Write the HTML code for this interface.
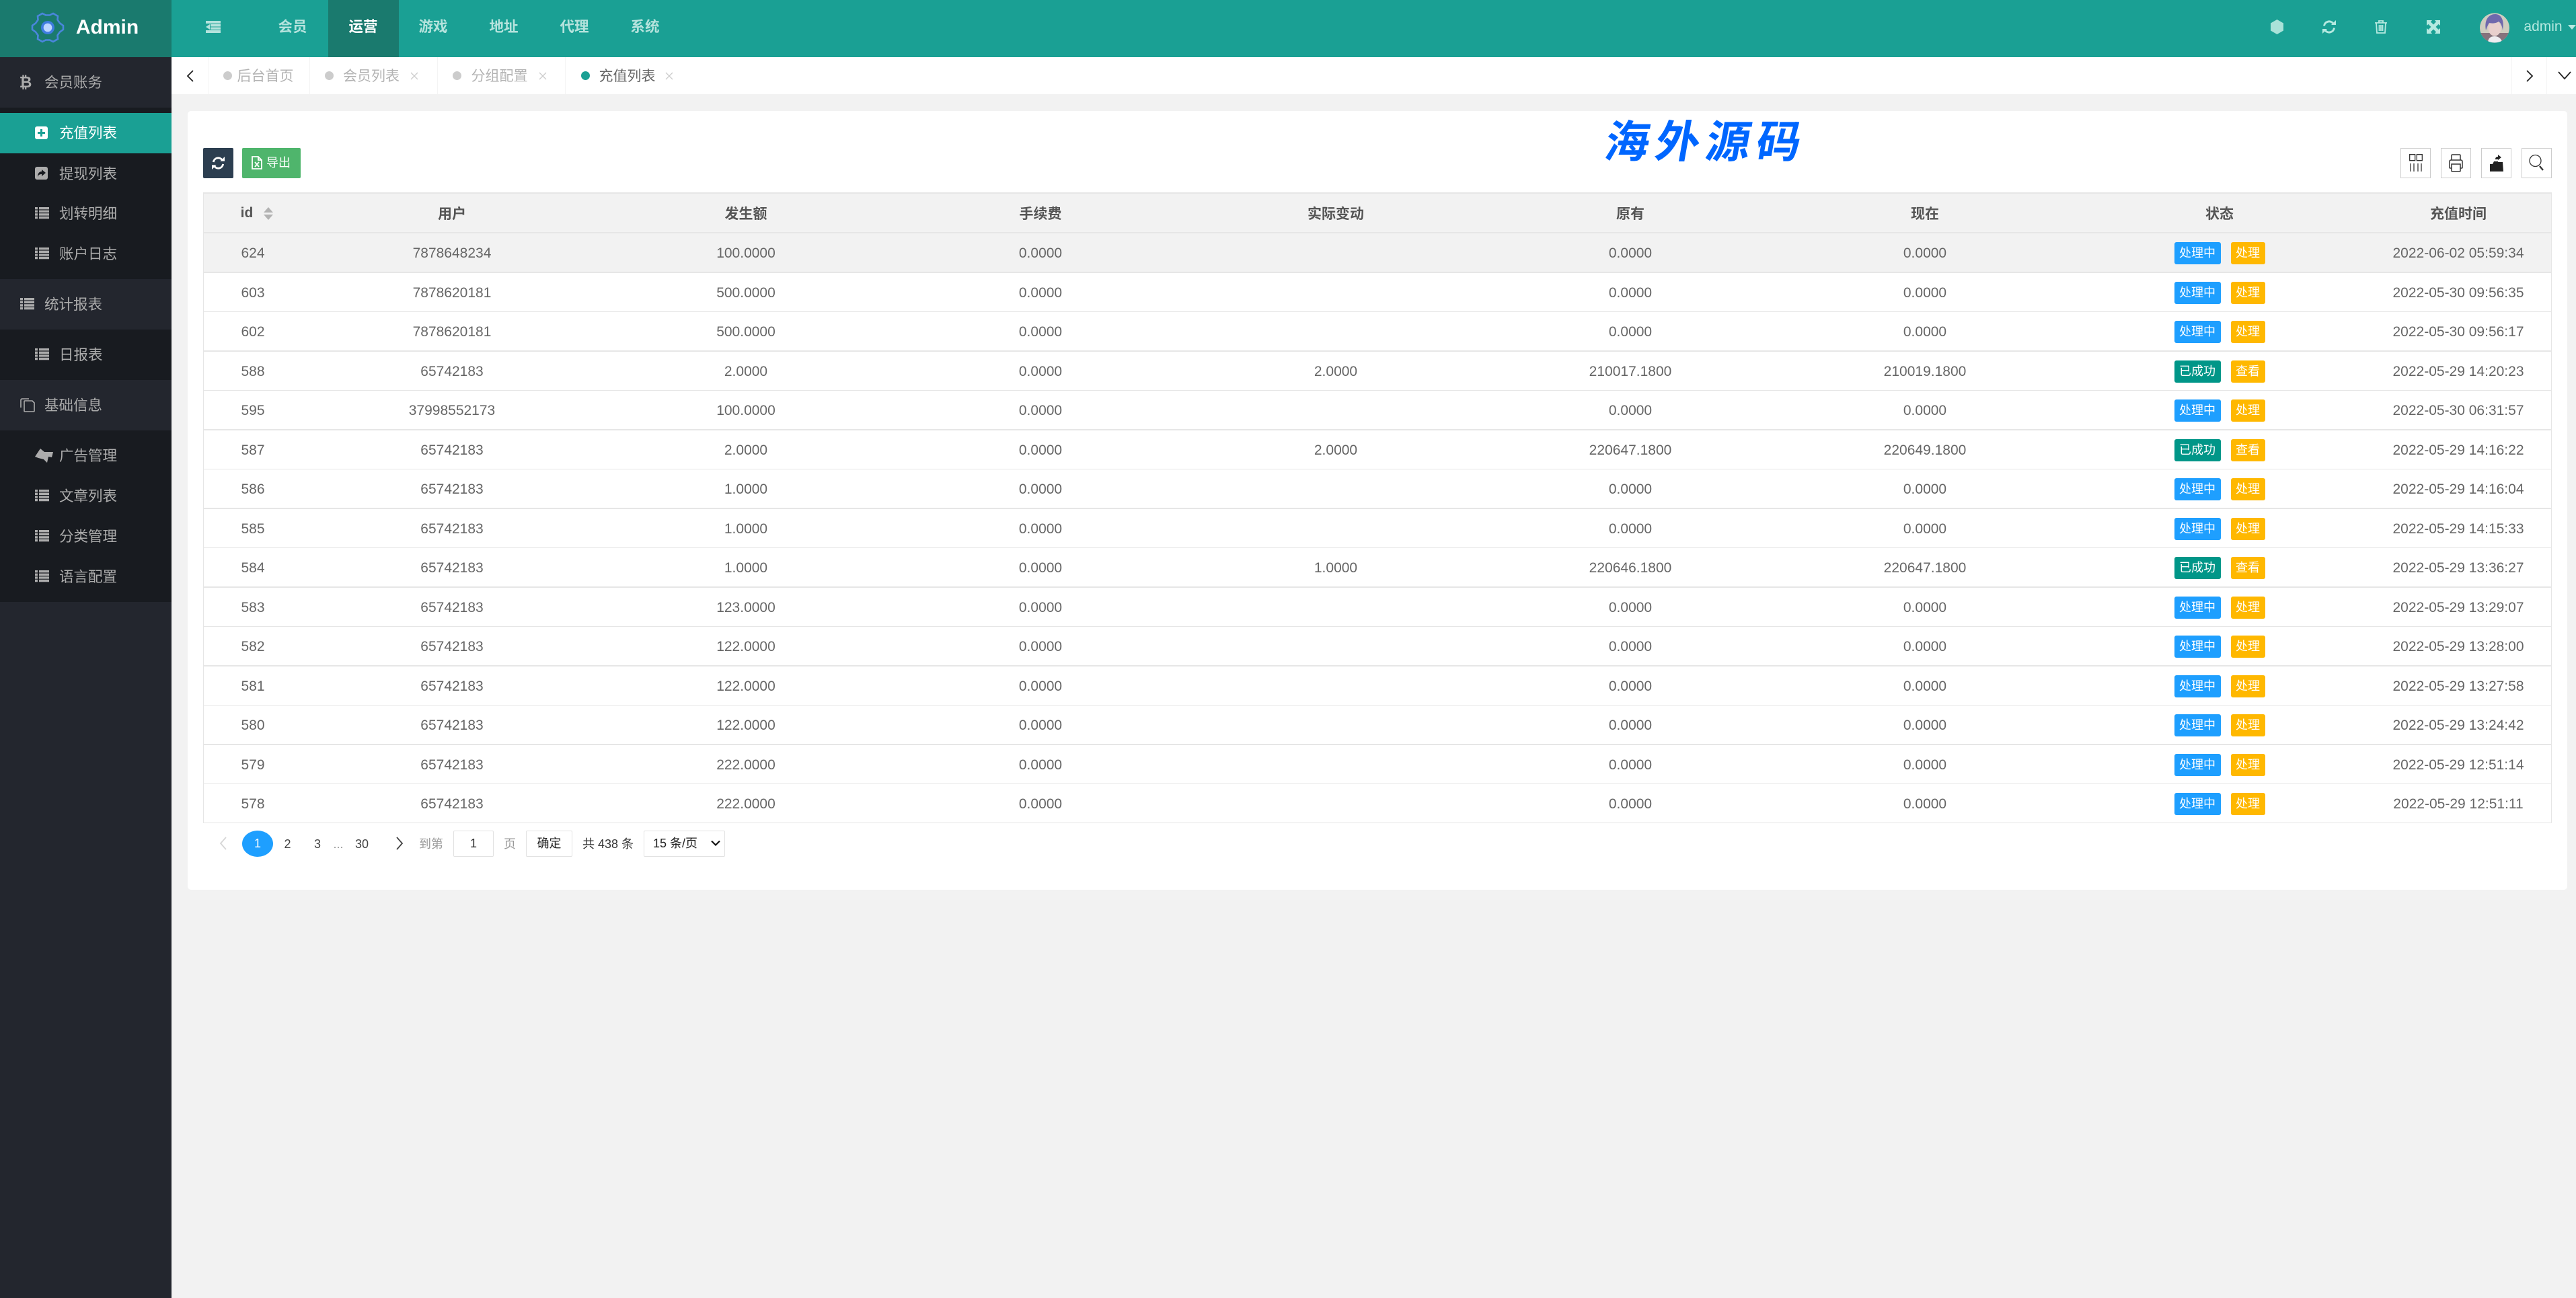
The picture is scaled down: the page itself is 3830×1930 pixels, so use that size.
<!DOCTYPE html>
<html lang="zh"><head><meta charset="utf-8"><title>Admin</title>
<style>
*{box-sizing:border-box}
html,body{margin:0;padding:0}
body{width:3830px;height:1930px;position:relative;overflow:hidden;background:#f2f2f2;font-family:"Liberation Sans","Noto Sans CJK SC",sans-serif;color:#666;font-size:21px}
.a{position:absolute}
.t{position:absolute;white-space:nowrap;line-height:30px;transform:translate(-50%,-50%)}
.s{position:absolute;white-space:nowrap;line-height:30px;transform:translateY(calc(-50% + 1px));color:#acacac;font-size:21.5px}
.nav{font-weight:bold;color:#b5e3dd;font-size:21.5px}
.tb{position:absolute;top:220px;width:45px;height:45px;border:1px solid #ccc;display:flex;align-items:center;justify-content:center;background:#fff}
.h{position:absolute;left:302px;top:288px;width:3492px;height:59px;background:#f2f2f2;border-bottom:2px solid #e6e6e6;display:grid;grid-template-columns:148px 444px 430px 446px 432px 444px 432px 444px 272px;align-items:center;text-align:center;font-weight:bold;color:#555;font-size:21px}
.r{position:absolute;left:302px;width:3492px;background:#fff;display:grid;grid-template-columns:148px 444px 430px 446px 432px 444px 432px 444px 272px;align-items:center;text-align:center;border-bottom:1px solid #e6e6e6;color:#666;font-size:21px;padding-top:2px}
.k{border-bottom:2px solid #e6e6e6}
.g{display:flex;justify-content:center;gap:15px}
.g b{font-weight:normal;height:33px;line-height:33px;color:#fff;font-size:18px;border-radius:3px;display:block;text-align:center}
.p{width:69px;background:#1e9fff}.o{width:69px;background:#009688}.y{width:51px;background:#ffb800}
.l{padding-right:6px}
.pg{position:absolute;top:1254.5px;transform:translate(-50%,-50%);font-size:18px;white-space:nowrap;color:#444;line-height:24px}
.bx{position:absolute;top:1235px;height:39px;border:1px solid #e2e2e2;border-radius:2px;background:#fff;text-align:center;line-height:37px;font-size:18px;color:#333}
</style></head><body>
<svg width="0" height="0" style="position:absolute"><defs>
<symbol id="li" viewBox="0 0 21 18"><path fill="#acacac" d="M0 0h4v3.400H0zM6 0h15v3.400H6zM0 4.600h4v3.400H0zM6 4.600h15v3.400H6zM0 9.200h4v3.400H0zM6 9.200h15v3.400H6zM0 13.800h4v3.400H0zM6 13.800h15v3.400H6z"/></symbol>
</defs></svg>

<!-- header -->
<div class="a" style="left:0;top:0;width:3830px;height:85px;background:#1aa094"></div>
<div class="a" style="left:0;top:0;width:255px;height:85px;background:#1a7a6e"></div>
<div class="a" style="left:488px;top:0;width:105px;height:85px;background:#1a7a6e"></div>
<svg class="a" style="left:46px;top:17px" width="50" height="48" viewBox="-25 -24 50 48"><path fill="none" stroke="#4a86dc" stroke-width="2.600" d="M-8-21 -3-18.500H3L8-21 15-17 14.500-11.500 18-6.500 23-3V3L18 6.500 14.500 11.500 15 17 8 21 3 18.500H-3L-8 21-15 17-14.500 11.500-18 6.500-23 3V-3L-18-6.500-14.500-11.500-15-17Z"/><circle r="10" fill="#3f7de0"/><circle r="6.300" fill="#bcd6ff"/></svg>
<div class="t" style="left:159.500px;top:41px;color:#fff;font-weight:bold;font-size:30px">Admin</div>
<svg class="a" style="left:306px;top:31px" width="22" height="18" viewBox="0 0 22 18"><path fill="#b5e3dd" d="M0 0h22v4H0zM7 5h15v3.500H7zM7 9.500h15v3.500H7zM0 14h22v4H0zM6 5v8L0 9z"/></svg>
<div class="t nav" style="left:435px;top:40px">会员</div>
<div class="t nav" style="left:540px;top:40px;color:#fff">运营</div>
<div class="t nav" style="left:644px;top:40px">游戏</div>
<div class="t nav" style="left:749px;top:40px">地址</div>
<div class="t nav" style="left:854px;top:40px">代理</div>
<div class="t nav" style="left:959px;top:40px">系统</div>
<svg class="a" style="left:3376px;top:29px" width="19" height="22" viewBox="0 0 19 22"><path fill="#a9e2d9" d="M9.500 0 19 5.500V16.500L9.500 22 0 16.500V5.500Z"/></svg>
<svg class="a" style="left:3453px;top:30px" width="20" height="20" viewBox="0 0 20 20"><path fill="none" stroke="#b5e9e0" stroke-width="3" d="M2.500 8.500A7.500 7.500 0 0 1 16 5M17.500 11.500A7.500 7.500 0 0 1 4 15"/><path fill="#b5e9e0" d="M13 7h7V0zM7 13H0v7z"/></svg>
<svg class="a" style="left:3531px;top:30px" width="18" height="20" viewBox="0 0 18 20"><path fill="none" stroke="#b5e9e0" stroke-width="1.800" d="M0 4h18M6 4V1h6v3M2 4l1 15h12l1-15M6.500 7v9M9 7v9M11.500 7v9"/></svg>
<svg class="a" style="left:3608px;top:30px" width="20" height="20" viewBox="0 0 20 20"><path fill="#b5e9e0" d="M0 0h8L6 2.500 10 6.500 14 2.500 12 0h8v8L17.500 6 13.500 10 17.500 14 20 12v8h-8l2-2.500-4-4-4 4L8 20H0v-8l2.500 2 4-4-4-4L0 8z"/></svg>
<svg class="a" style="left:3687px;top:19px" width="44" height="45" viewBox="0 0 44 45"><defs><clipPath id="cp"><circle cx="22" cy="22.500" r="22"/></clipPath></defs><g clip-path="url(#cp)"><rect width="44" height="45" fill="#cfcdbf"/><rect y="30" width="44" height="15" fill="#85737c"/><path d="M12 45c0-8 5-10 10-10s11 3 11 10z" fill="#eeecf0"/><ellipse cx="22" cy="23" rx="9.500" ry="11.500" fill="#e8cfcd"/><path d="M9 26C6 8 15 2 23 2s14 8 11 24c-1-7-3-11-6-13-4 3-11 3-14 2-2 3-3 6-5 11z" fill="#6f68ad"/></g></svg>
<div class="t" style="left:3781px;top:40px;color:#b5e9e0;font-size:21px">admin</div>
<div class="a" style="left:3818px;top:37px;width:0;height:0;border-left:6px solid transparent;border-right:6px solid transparent;border-top:7px solid #b5e9e0"></div>

<!-- sidebar -->
<div class="a" style="left:0;top:85px;width:255px;height:1845px;background:#23262e"></div>
<div class="a" style="left:0;top:160px;width:255px;height:255px;background:#181b20"></div>
<div class="a" style="left:0;top:490px;width:255px;height:75px;background:#181b20"></div>
<div class="a" style="left:0;top:640px;width:255px;height:255px;background:#181b20"></div>
<div class="a" style="left:0;top:168px;width:255px;height:60px;background:#1aa094"></div>
<div class="t" style="left:38px;top:122px;color:#acacac;font-size:23px;font-weight:bold">₿</div>
<div class="s" style="left:66px;top:122px">会员账务</div>
<svg class="a" style="left:52px;top:188px" width="19" height="19" viewBox="0 0 19 19"><rect width="19" height="19" rx="3" fill="#fff"/><path fill="#1aa094" d="M8 4h3v4h4v3h-4v4H8v-4H4V8h4z"/></svg>
<div class="s" style="left:88px;top:197px;color:#fff">充值列表</div>
<svg class="a" style="left:52px;top:248px" width="19" height="19" viewBox="0 0 19 19"><rect width="19" height="19" rx="3" fill="#acacac"/><path fill="#181b20" d="M4 15C4 9 7 7 10 7V4l6 5-6 5v-3c-3 0-5 1-6 4z"/></svg>
<div class="s" style="left:88px;top:258px">提现列表</div>
<svg class="a" style="left:52px;top:308px" width="21" height="18"><use href="#li"/></svg>
<div class="s" style="left:88px;top:317px">划转明细</div>
<svg class="a" style="left:52px;top:368px" width="21" height="18"><use href="#li"/></svg>
<div class="s" style="left:88px;top:377px">账户日志</div>
<svg class="a" style="left:30px;top:443px" width="21" height="18"><use href="#li"/></svg>
<div class="s" style="left:66px;top:452px">统计报表</div>
<svg class="a" style="left:52px;top:518px" width="21" height="18"><use href="#li"/></svg>
<div class="s" style="left:88px;top:527px">日报表</div>
<svg class="a" style="left:30px;top:592px" width="22" height="21" viewBox="0 0 22 21"><path fill="none" stroke="#acacac" stroke-width="1.600" d="M13 1H3Q1 1 1 3v11M7 4h11l3 3v12a1 1 0 0 1-1 1H7a1 1 0 0 1-1-1V5a1 1 0 0 1 1-1z"/></svg>
<div class="s" style="left:66px;top:602px">基础信息</div>
<svg class="a" style="left:52px;top:667px" width="28" height="21" viewBox="0 0 28 21"><path fill="#acacac" d="M0 12 8 0 14 5 27 5 25 13 20 12 18 21 13 16 5 14z"/></svg>
<div class="s" style="left:88px;top:677px">广告管理</div>
<svg class="a" style="left:52px;top:728px" width="21" height="18"><use href="#li"/></svg>
<div class="s" style="left:88px;top:737px">文章列表</div>
<svg class="a" style="left:52px;top:788px" width="21" height="18"><use href="#li"/></svg>
<div class="s" style="left:88px;top:797px">分类管理</div>
<svg class="a" style="left:52px;top:848px" width="21" height="18"><use href="#li"/></svg>
<div class="s" style="left:88px;top:857px">语言配置</div>

<!-- tabs -->
<div class="a" style="left:255px;top:85px;width:3575px;height:55px;background:#fff"></div>
<div class="a" style="left:310px;top:85px;width:1px;height:55px;background:#f4f4f4"></div>
<div class="a" style="left:460px;top:85px;width:1px;height:55px;background:#f4f4f4"></div>
<div class="a" style="left:650px;top:85px;width:1px;height:55px;background:#f4f4f4"></div>
<div class="a" style="left:840px;top:85px;width:1px;height:55px;background:#f4f4f4"></div>
<div class="a" style="left:3734px;top:85px;width:1px;height:55px;background:#f4f4f4"></div>
<div class="a" style="left:3786px;top:85px;width:1px;height:55px;background:#f4f4f4"></div>
<svg class="a" style="left:277px;top:104px" width="12" height="18"><path fill="none" stroke="#222" stroke-width="1.800" d="M10 1 2 9l8 8"/></svg>
<svg class="a" style="left:3755px;top:104px" width="12" height="18"><path fill="none" stroke="#222" stroke-width="1.800" d="M2 1l8 8-8 8"/></svg>
<svg class="a" style="left:3803px;top:106px" width="20" height="13"><path fill="none" stroke="#222" stroke-width="1.800" d="M1 1l9 10 9-10"/></svg>
<div class="a" style="left:332px;top:106px;width:13px;height:13px;border-radius:50%;background:#ccc"></div>
<div class="t" style="left:394.500px;top:114px;color:#b3b3b3">后台首页</div>
<div class="a" style="left:483px;top:106px;width:13px;height:13px;border-radius:50%;background:#ccc"></div>
<div class="t" style="left:552px;top:114px;color:#b3b3b3">会员列表</div>
<svg class="a" style="left:610px;top:107px" width="12" height="12"><path stroke="#ccc" stroke-width="1.300" d="M1 1l10 10M11 1 1 11"/></svg>
<div class="a" style="left:673px;top:106px;width:13px;height:13px;border-radius:50%;background:#ccc"></div>
<div class="t" style="left:742.500px;top:114px;color:#b3b3b3">分组配置</div>
<svg class="a" style="left:801px;top:107px" width="12" height="12"><path stroke="#ccc" stroke-width="1.300" d="M1 1l10 10M11 1 1 11"/></svg>
<div class="a" style="left:864px;top:106px;width:13px;height:13px;border-radius:50%;background:#1aa094"></div>
<div class="t" style="left:932.500px;top:114px;color:#666">充值列表</div>
<svg class="a" style="left:989px;top:107px" width="12" height="12"><path stroke="#ccc" stroke-width="1.300" d="M1 1l10 10M11 1 1 11"/></svg>

<!-- card -->
<div class="a" style="left:279px;top:165px;width:3538px;height:1158px;background:#fff;border-radius:5px"></div>
<div class="t" style="left:2538px;top:206px;color:#0066ff;font-family:'Noto Sans CJK SC',sans-serif;font-weight:700;font-size:66px;line-height:76px;letter-spacing:9px;transform:translate(-50%,-50%) skewX(-10deg)">海外源码</div>

<div class="a" style="left:302px;top:220px;width:45px;height:45px;background:#2c3e50;border-radius:2px"></div>
<svg class="a" style="left:315px;top:233px" width="19" height="19" viewBox="0 0 20 20"><path fill="none" stroke="#fff" stroke-width="3" d="M2.500 8.500A7.500 7.500 0 0 1 16 5M17.500 11.500A7.500 7.500 0 0 1 4 15"/><path fill="#fff" d="M13 7h7V0zM7 13H0v7z"/></svg>
<div class="a" style="left:360px;top:220px;width:87px;height:45px;background:#4fb56c;border-radius:2px"></div>
<svg class="a" style="left:374px;top:232px" width="16" height="20" viewBox="0 0 16 20"><path fill="none" stroke="#fff" stroke-width="1.800" d="M1 1h9l5 5v13H1zM10 1v5h5M5 9l6 7M11 9l-6 7"/></svg>
<div class="t" style="left:414px;top:242px;color:#fff;font-size:18px">导出</div>

<div class="tb" style="left:3569px"><svg width="20" height="27" viewBox="0 0 20 27"><path fill="none" stroke="#333" stroke-width="1.300" d="M.7.700h8v9h-8zM11.300.700h8v9h-8zM2 14v12M7 14v12M13 14v12M18 14v12"/></svg></div>
<div class="tb" style="left:3629px"><svg width="21" height="27" viewBox="0 0 21 27"><path fill="none" stroke="#333" stroke-width="1.500" d="M4 9V2a1 1 0 0 1 1-1h11a1 1 0 0 1 1 1v7M4 21H2a1 1 0 0 1-1-1V11a2 2 0 0 1 2-2h15a2 2 0 0 1 2 2v9a1 1 0 0 1-1 1h-2M4 15h13v10a1 1 0 0 1-1 1H5a1 1 0 0 1-1-1z"/></svg></div>
<div class="tb" style="left:3689px"><svg width="20" height="27" viewBox="0 0 20 27"><path fill="#222" d="M0 26V15h4l2-4h6v-3H8c0-3 2-4 4-4V1l5 4-5 4v3h7l1 14z"/></svg></div>
<div class="tb" style="left:3749px"><svg width="23" height="27" viewBox="0 0 23 27"><circle cx="9.500" cy="10" r="8.500" fill="none" stroke="#333" stroke-width="1.300"/><path d="M16 18l5 6" stroke="#333" stroke-width="2.400"/></svg></div>

<!-- table -->
<div class="a" style="left:302px;top:286px;width:3492px;height:2px;background:#e6e6e6"></div>
<div class="a" style="left:302px;top:286px;width:1px;height:938px;background:#e6e6e6;z-index:2"></div>
<div class="a" style="left:3793px;top:286px;width:1px;height:938px;background:#e6e6e6;z-index:2"></div>
<div class="h"><span></span><span>用户</span><span>发生额</span><span>手续费</span><span>实际变动</span><span>原有</span><span>现在</span><span>状态</span><span class="l">充值时间</span></div>
<div class="t" style="left:367px;top:317px;font-weight:bold;color:#555;font-size:21px">id</div>
<svg class="a" style="left:391px;top:308px" width="16" height="19"><path fill="#b2b2b2" d="M8 0l7 8H1zM1 11h14l-7 8z"/></svg>

<div class="r k" style="top:347px;height:59px;background:#f2f2f2"><span>624</span><span>7878648234</span><span>100.0000</span><span>0.0000</span><span></span><span>0.0000</span><span>0.0000</span><span class="g"><b class="p">处理中</b><b class="y">处理</b></span><span class="l">2022-06-02 05:59:34</span></div>
<div class="r" style="top:406px;height:58px"><span>603</span><span>7878620181</span><span>500.0000</span><span>0.0000</span><span></span><span>0.0000</span><span>0.0000</span><span class="g"><b class="p">处理中</b><b class="y">处理</b></span><span class="l">2022-05-30 09:56:35</span></div>
<div class="r k" style="top:464px;height:59px"><span>602</span><span>7878620181</span><span>500.0000</span><span>0.0000</span><span></span><span>0.0000</span><span>0.0000</span><span class="g"><b class="p">处理中</b><b class="y">处理</b></span><span class="l">2022-05-30 09:56:17</span></div>
<div class="r" style="top:523px;height:58px"><span>588</span><span>65742183</span><span>2.0000</span><span>0.0000</span><span>2.0000</span><span>210017.1800</span><span>210019.1800</span><span class="g"><b class="o">已成功</b><b class="y">查看</b></span><span class="l">2022-05-29 14:20:23</span></div>
<div class="r k" style="top:581px;height:59px"><span>595</span><span>37998552173</span><span>100.0000</span><span>0.0000</span><span></span><span>0.0000</span><span>0.0000</span><span class="g"><b class="p">处理中</b><b class="y">处理</b></span><span class="l">2022-05-30 06:31:57</span></div>
<div class="r" style="top:640px;height:58px"><span>587</span><span>65742183</span><span>2.0000</span><span>0.0000</span><span>2.0000</span><span>220647.1800</span><span>220649.1800</span><span class="g"><b class="o">已成功</b><b class="y">查看</b></span><span class="l">2022-05-29 14:16:22</span></div>
<div class="r k" style="top:698px;height:59px"><span>586</span><span>65742183</span><span>1.0000</span><span>0.0000</span><span></span><span>0.0000</span><span>0.0000</span><span class="g"><b class="p">处理中</b><b class="y">处理</b></span><span class="l">2022-05-29 14:16:04</span></div>
<div class="r" style="top:757px;height:58px"><span>585</span><span>65742183</span><span>1.0000</span><span>0.0000</span><span></span><span>0.0000</span><span>0.0000</span><span class="g"><b class="p">处理中</b><b class="y">处理</b></span><span class="l">2022-05-29 14:15:33</span></div>
<div class="r k" style="top:815px;height:59px"><span>584</span><span>65742183</span><span>1.0000</span><span>0.0000</span><span>1.0000</span><span>220646.1800</span><span>220647.1800</span><span class="g"><b class="o">已成功</b><b class="y">查看</b></span><span class="l">2022-05-29 13:36:27</span></div>
<div class="r" style="top:874px;height:58px"><span>583</span><span>65742183</span><span>123.0000</span><span>0.0000</span><span></span><span>0.0000</span><span>0.0000</span><span class="g"><b class="p">处理中</b><b class="y">处理</b></span><span class="l">2022-05-29 13:29:07</span></div>
<div class="r k" style="top:932px;height:59px"><span>582</span><span>65742183</span><span>122.0000</span><span>0.0000</span><span></span><span>0.0000</span><span>0.0000</span><span class="g"><b class="p">处理中</b><b class="y">处理</b></span><span class="l">2022-05-29 13:28:00</span></div>
<div class="r" style="top:991px;height:58px"><span>581</span><span>65742183</span><span>122.0000</span><span>0.0000</span><span></span><span>0.0000</span><span>0.0000</span><span class="g"><b class="p">处理中</b><b class="y">处理</b></span><span class="l">2022-05-29 13:27:58</span></div>
<div class="r k" style="top:1049px;height:59px"><span>580</span><span>65742183</span><span>122.0000</span><span>0.0000</span><span></span><span>0.0000</span><span>0.0000</span><span class="g"><b class="p">处理中</b><b class="y">处理</b></span><span class="l">2022-05-29 13:24:42</span></div>
<div class="r" style="top:1108px;height:58px"><span>579</span><span>65742183</span><span>222.0000</span><span>0.0000</span><span></span><span>0.0000</span><span>0.0000</span><span class="g"><b class="p">处理中</b><b class="y">处理</b></span><span class="l">2022-05-29 12:51:14</span></div>
<div class="r" style="top:1166px;height:58px"><span>578</span><span>65742183</span><span>222.0000</span><span>0.0000</span><span></span><span>0.0000</span><span>0.0000</span><span class="g"><b class="p">处理中</b><b class="y">处理</b></span><span class="l">2022-05-29 12:51:11</span></div>

<!-- pagination -->
<svg class="a" style="left:326px;top:1244px" width="12" height="20"><path fill="none" stroke="#d6d6d6" stroke-width="1.800" d="M10 1 2 10l8 9"/></svg>
<div class="a" style="left:360px;top:1235px;width:46px;height:39px;border-radius:50%;background:#1e9fff;color:#fff;text-align:center;line-height:39px;font-size:18px">1</div>
<div class="pg" style="left:427.500px">2</div>
<div class="pg" style="left:472px">3</div>
<div class="pg" style="left:503px;color:#999">...</div>
<div class="pg" style="left:538px">30</div>
<svg class="a" style="left:588px;top:1244px" width="12" height="20"><path fill="none" stroke="#444" stroke-width="1.800" d="M2 1l8 9-8 9"/></svg>
<div class="pg" style="left:641px;color:#999">到第</div>
<div class="bx" style="left:674px;width:60px">1</div>
<div class="pg" style="left:758px;color:#999">页</div>
<div class="bx" style="left:782px;width:69px;color:#222">确定</div>
<div class="pg" style="left:904px;color:#333">共 438 条</div>
<div class="bx" style="left:957px;width:121px;text-align:left;padding-left:13px;color:#222">15 条/页</div>
<svg class="a" style="left:1057px;top:1249px" width="14" height="10"><path fill="none" stroke="#111" stroke-width="2.200" d="M1 1.500l6 6 6-6"/></svg>
</body></html>
